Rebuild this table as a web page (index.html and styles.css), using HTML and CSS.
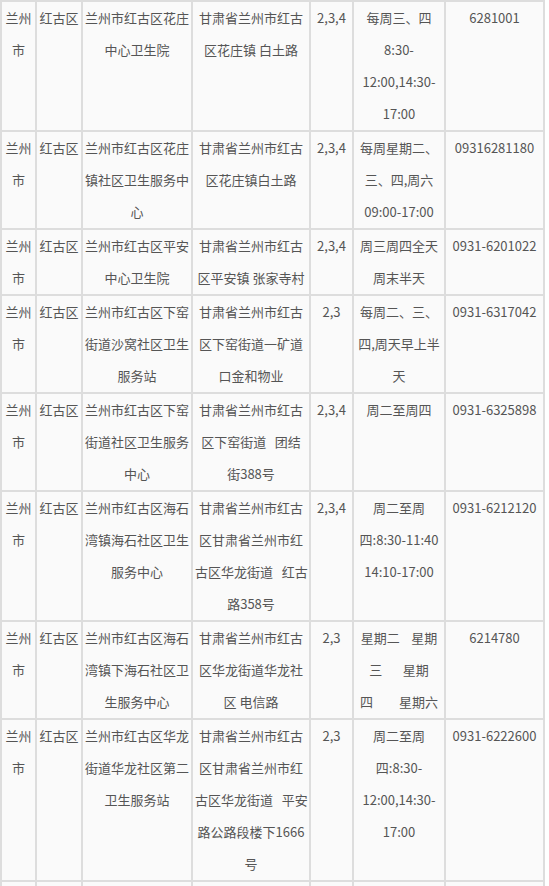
FILE: index.html
```html
<!DOCTYPE html>
<html lang="zh-CN">
<head>
<meta charset="utf-8">
<title>兰州市红古区卫生服务机构</title>
<link rel="stylesheet" href="styles.css">
</head>
<body>
<table class="list">
  <colgroup>
    <col class="c-city">
    <col class="c-dist">
    <col class="c-name">
    <col class="c-addr">
    <col class="c-type">
    <col class="c-time">
    <col class="c-tel">
  </colgroup>
  <tbody>
    <tr>
      <td>兰州<br>市</td>
      <td>红古区</td>
      <td>兰州市红古区花庄<br>中心卫生院</td>
      <td>甘肃省兰州市红古<br>区花庄镇 白土路</td>
      <td>2,3,4</td>
      <td>每周三、四<br>8:30-<br>12:00,14:30-<br>17:00</td>
      <td>6281001</td>
    </tr>
    <tr>
      <td>兰州<br>市</td>
      <td>红古区</td>
      <td>兰州市红古区花庄<br>镇社区卫生服务中<br>心</td>
      <td>甘肃省兰州市红古<br>区花庄镇白土路</td>
      <td>2,3,4</td>
      <td>每周星期二、<br>三、四,周六<br>09:00-17:00</td>
      <td>09316281180</td>
    </tr>
    <tr>
      <td>兰州<br>市</td>
      <td>红古区</td>
      <td>兰州市红古区平安<br>中心卫生院</td>
      <td>甘肃省兰州市红古<br>区平安镇 张家寺村</td>
      <td>2,3,4</td>
      <td>周三周四全天<br>周末半天</td>
      <td>0931-6201022</td>
    </tr>
    <tr>
      <td>兰州<br>市</td>
      <td>红古区</td>
      <td>兰州市红古区下窑<br>街道沙窝社区卫生<br>服务站</td>
      <td>甘肃省兰州市红古<br>区下窑街道一矿道<br>口金和物业</td>
      <td>2,3</td>
      <td>每周二、三、<br>四,周天早上半<br>天</td>
      <td>0931-6317042</td>
    </tr>
    <tr>
      <td>兰州<br>市</td>
      <td>红古区</td>
      <td>兰州市红古区下窑<br>街道社区卫生服务<br>中心</td>
      <td>甘肃省兰州市红古<br>区下窑街道&nbsp;&nbsp; 团结<br>街388号</td>
      <td>2,3,4</td>
      <td>周二至周四</td>
      <td>0931-6325898</td>
    </tr>
    <tr>
      <td>兰州<br>市</td>
      <td>红古区</td>
      <td>兰州市红古区海石<br>湾镇海石社区卫生<br>服务中心</td>
      <td>甘肃省兰州市红古<br>区甘肃省兰州市红<br>古区华龙街道&nbsp;&nbsp; 红古<br>路358号</td>
      <td>2,3,4</td>
      <td>周二至周<br>四:8:30-11:40<br>14:10-17:00</td>
      <td>0931-6212120</td>
    </tr>
    <tr>
      <td>兰州<br>市</td>
      <td>红古区</td>
      <td>兰州市红古区海石<br>湾镇下海石社区卫<br>生服务中心</td>
      <td>甘肃省兰州市红古<br>区华龙街道华龙社<br>区 电信路</td>
      <td>2,3</td>
      <td>星期二&nbsp;&nbsp;&nbsp; 星期<br>三&nbsp;&nbsp;&nbsp;&nbsp;&nbsp;&nbsp; 星期<br>四&nbsp;&nbsp;&nbsp;&nbsp;&nbsp;&nbsp;&nbsp;&nbsp; 星期六</td>
      <td>6214780</td>
    </tr>
    <tr>
      <td>兰州<br>市</td>
      <td>红古区</td>
      <td>兰州市红古区华龙<br>街道华龙社区第二<br>卫生服务站</td>
      <td>甘肃省兰州市红古<br>区甘肃省兰州市红<br>古区华龙街道&nbsp;&nbsp; 平安<br>路公路段楼下1666<br>号</td>
      <td>2,3</td>
      <td>周二至周<br>四:8:30-<br>12:00,14:30-<br>17:00</td>
      <td>0931-6222600</td>
    </tr>
    <tr class="tail">
      <td>&nbsp;</td>
      <td>&nbsp;</td>
      <td>&nbsp;</td>
      <td>&nbsp;</td>
      <td>&nbsp;</td>
      <td>&nbsp;</td>
      <td>&nbsp;</td>
    </tr>
  </tbody>
</table>
</body>
</html>
```
FILE: styles.css
```css
html, body {
  margin: 0;
  padding: 0;
  background: #ffffff;
}

body {
  font-family: "Noto Sans CJK SC", "Microsoft YaHei", "Noto Sans", sans-serif;
  font-size: 13px;
  color: #555555;
}

.list {
  width: 545px;
  table-layout: fixed;
  border-collapse: separate;
  border-spacing: 0;
  border: 1px solid #dddddd;
  background: #fafafa;
}

.list td {
  box-sizing: border-box;
  border: 1px solid #dddddd;
  padding: 0 2px;
  line-height: 32px;
  text-align: center;
  vertical-align: top;
  white-space: nowrap;
  overflow: hidden;
}

.c-city { width: 35px; }
.c-dist { width: 46px; }
.c-name { width: 110px; }
.c-addr { width: 118px; }
.c-type { width: 43px; }
.c-time { width: 92px; }
.c-tel  { width: 99px; }
```
